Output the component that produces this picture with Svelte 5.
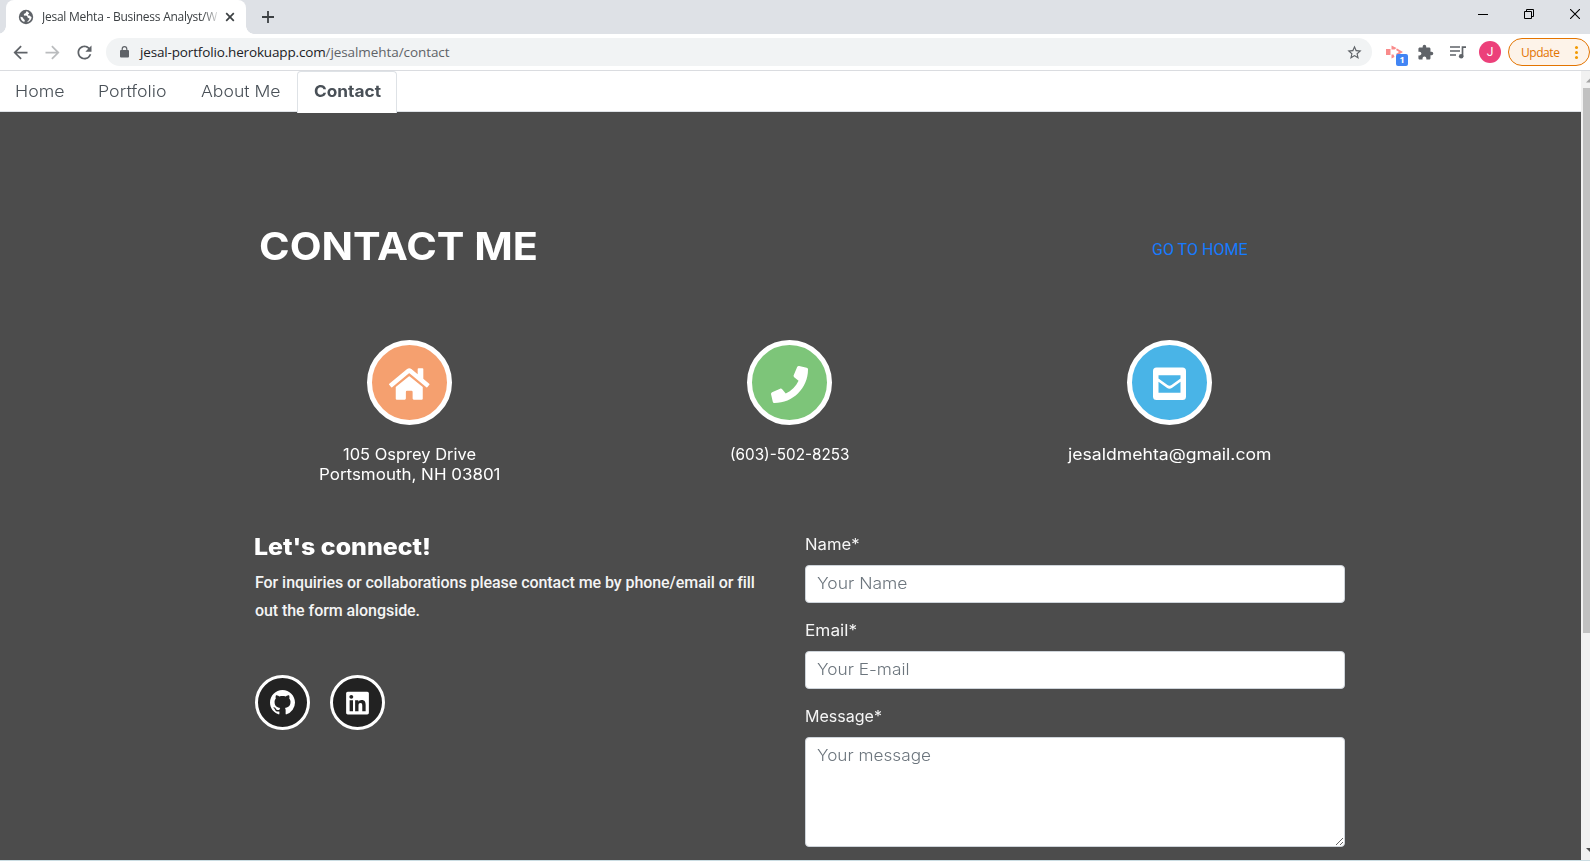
<script>
  const nav = [
    { label: 'Home', width: 49.5 },
    { label: 'Portfolio', width: 68.500 },
    { label: 'About Me', width: 79.5 },
    { label: 'Contact', width: 67, active: true }
  ];

  const fields = [
    { label: 'Name*', width: 54.5, hint: 'Your Name', hintWidth: 90.5 },
    { label: 'Email*', width: 52, hint: 'Your E-mail', hintWidth: 92.5 },
    { label: 'Message*', width: 77, hint: 'Your message', hintWidth: 114, area: true }
  ];

  // Tracks a line of text out (or in) so that it fills the given measure.
  function measure(node, width) {
    const n = node.textContent.length;
    const natural = node.getBoundingClientRect().width;
    node.style.letterSpacing = `${(width - natural) / n}px`;
  }

  function widen(node, width) {
    const natural = node.getBoundingClientRect().width;
    node.style.display = 'inline-block';
    node.style.width = `${width}px`;
    node.style.transformOrigin = '0 50%';
    node.style.transform = `scaleX(${width / natural})`;
  }
</script>

<div class="window">
  <header class="tabstrip">
    <div class="tab">
      <svg class="globe" width="16" height="16" viewBox="0 0 16 16"><circle cx="8" cy="8" r="7.2" fill="#5f6368" /><path d="M8.6 2.2c-1 .6-.2 1.5-1.2 2-.9.4-1.6.5-1.6 1.5 0 .9 1 1 2 .9 1.300 0 1.500.8 1.700 1.600.3.9 1.500.5 1.900 1.300.3.7-.4 1.200-.8 1.800-.4.7-.9 1.300-2 1.900 2.800-.2 4.900-2.300 5-5.200-.8-.1-1.300-.6-1.700-1.200-.7-.2-1.700 0-2-.7-.2-.8.8-1.100 1.300-1.700-.6-1.100-1.600-1.900-2.600-2.200zM2.400 7.800c0 2.500 1.600 4.600 3.900 5.300.1-.9.500-1.100.5-1.900-.1-.8-1.400-.8-1.500-1.800 0-1-1.300-1.400-2.900-1.600z" fill="#fff" /></svg>
      <div class="title"><span use:measure={175}>Jesal Mehta - Business Analyst/W</span></div>
      <svg width="10" height="10" viewBox="0 0 10 10"><path d="M1.200 1.200l7.600 7.600M8.800 1.200L1.200 8.800" stroke="#3c4043" stroke-width="1.700" /></svg>
    </div>
    <svg class="plus" width="12" height="12" viewBox="0 0 12 12"><path d="M6 0v12M0 6h12" stroke="#3c4043" stroke-width="1.800" /></svg>
    <div class="controls">
      <svg width="10" height="10" viewBox="0 0 10 10"><path d="M0 5.500h10" stroke="#000" /></svg>
      <svg width="10" height="10" viewBox="0 0 10 10"><path d="M.5 2.500h7v7h-7zM2.500 2.500v-2h7v7h-2" fill="none" stroke="#000" /></svg>
      <svg width="10" height="10" viewBox="0 0 10 10"><path d="M0 0l10 10M10 0L0 10" stroke="#000" stroke-width="1.100" /></svg>
    </div>
  </header>

  <div class="toolbar">
    <div class="history">
      <svg width="21" height="21" viewBox="0 0 24 24" fill="#5f6368"><path d="M20 11H7.830l5.590-5.590L12 4l-8 8 8 8 1.410-1.410L7.830 13H20v-2z" /></svg>
      <svg width="21" height="21" viewBox="0 0 24 24" fill="#babcbe"><path d="M12 4l-1.410 1.410L16.170 11H4v2h12.170l-5.580 5.590L12 20l8-8z" /></svg>
      <svg width="21" height="21" viewBox="0 0 24 24" fill="#5f6368"><path d="M17.650 6.350A7.958 7.958 0 0 0 12 4c-4.420 0-7.990 3.580-7.990 8s3.570 8 7.990 8c3.730 0 6.840-2.550 7.730-6h-2.080A5.990 5.990 0 0 1 12 18c-3.310 0-6-2.690-6-6s2.690-6 6-6c1.660 0 3.140.69 4.220 1.780L13 11h7V4l-2.350 2.350z" /></svg>
    </div>
    <div class="omnibox">
      <svg class="lock" width="9" height="12" viewBox="0 0 9 12"><rect y="4" width="9" height="7.500" rx="1" fill="#5f6368" /><path d="M2.200 5V2.900a2.300 2.300 0 0 1 4.600 0V5" fill="none" stroke="#5f6368" stroke-width="1.200" /></svg>
      <div class="url"><span class="host" use:measure={185.500}>jesal-portfolio.herokuapp.com</span><span class="path" use:measure={124}>/jesalmehta/contact</span></div>
      <svg class="star" width="17" height="17" viewBox="0 0 24 24" fill="#5f6368"><path d="M22 9.240l-7.190-.62L12 2 9.190 8.630 2 9.240l5.460 4.730L5.820 21 12 17.270 18.180 21l-1.630-7.030L22 9.240zM12 15.400l-3.760 2.270 1-4.280-3.320-2.880 4.380-.38L12 6.100l1.710 4.040 4.380.38-3.320 2.880 1 4.280L12 15.400z" /></svg>
    </div>
    <div class="extensions">
      <div class="recorder">
        <svg width="17" height="14" viewBox="0 0 17 14"><path d="M0 4h4.500v6H0zM5.500 4.500V.5l5 2.500-2 1.500zM5.500 9.500v4l3-1.500-1-2.500zM11 3.500L17 7l-6 3.500-1-1.500L13 7l-3-2z" fill="#f98b8b" /></svg>
        <span class="badge">1</span>
      </div>
      <svg width="17" height="17" viewBox="0 0 24 24" fill="#5f6368"><path d="M20.500 11H19V7c0-1.100-.9-2-2-2h-4V3.500a2.500 2.500 0 0 0-5 0V5H4c-1.100 0-1.990.9-1.990 2v3.800H3.500c1.490 0 2.700 1.210 2.700 2.700s-1.210 2.700-2.700 2.700H2V20c0 1.100.9 2 2 2h3.800v-1.500c0-1.490 1.210-2.700 2.700-2.700s2.700 1.210 2.700 2.700V22H17c1.100 0 2-.9 2-2v-4h1.500a2.500 2.500 0 0 0 0-5z" /></svg>
      <svg class="queue" width="16" height="13" viewBox="0 0 16 13"><path d="M0 1h10M0 5h10M0 9h6M12.500 10V1.200H16" fill="none" stroke="#5f6368" stroke-width="1.700" /><circle cx="11.200" cy="10.200" r="2.300" fill="#5f6368" /></svg>
      <div class="avatar">J</div>
    </div>
    <div class="update"><span use:measure={38.500}>Update</span><i></i></div>
  </div>

  <div class="viewport">
    <div class="page">
      <nav>
        {#each nav as item}
          <a class:active={item.active}><span use:widen={item.width}>{item.label}</span></a>
        {/each}
      </nav>

      <main>
        <div class="masthead">
          <h1><span use:widen={279}>CONTACT ME</span></h1>
          <a class="home-link"><span use:measure={95.500}>GO TO HOME</span></a>
        </div>

        <section class="details">
          <div class="detail">
            <div class="disc orange"><svg width="40.500" height="36" viewBox="0 0 576 512" fill="#fff"><path d="M280.370 148.260L96 300.110V464a16 16 0 0 0 16 16l112.060-.29a16 16 0 0 0 15.920-16V368a16 16 0 0 1 16-16h64a16 16 0 0 1 16 16v95.640a16 16 0 0 0 16 16.050L464 480a16 16 0 0 0 16-16V300L295.670 148.260a12.190 12.190 0 0 0-15.300 0zM571.600 251.470L488 182.560V44.050a12 12 0 0 0-12-12h-56a12 12 0 0 0-12 12v72.610L318.470 43a48 48 0 0 0-61 0L4.340 251.470a12 12 0 0 0-1.600 16.900l25.500 31A12 12 0 0 0 45.150 301l235.220-193.740a12.190 12.190 0 0 1 15.300 0L530.900 301a12 12 0 0 0 16.900-1.600l25.500-31a12 12 0 0 0-1.700-16.930z" /></svg></div>
            <p><span use:widen={133}>105 Osprey Drive</span></p>
            <p><span use:widen={181.500}>Portsmouth, NH 03801</span></p>
          </div>
          <div class="detail">
            <div class="disc green"><svg width="37" height="37" viewBox="0 0 512 512" fill="#fff"><path d="M493.400 24.600l-104-24c-11.300-2.600-22.900 3.300-27.500 13.900l-48 112c-4.200 9.800-1.400 21.300 6.900 28l60.600 49.600c-36 76.700-98.900 140.500-177.200 177.200l-49.600-60.600c-6.800-8.300-18.200-11.100-28-6.900l-112 48C3.900 366.500-2 378.100.6 389.400l24 104C27.100 504.200 36.700 512 48 512c256.100 0 464-207.500 464-464 0-11.200-7.700-20.900-18.600-23.400z" /></svg></div>
            <p><span use:widen={119.500}>(603)-502-8253</span></p>
          </div>
          <div class="detail">
            <div class="disc blue"><svg width="33" height="36" viewBox="0 0 33 36"><path fill="#fff" fill-rule="evenodd" d="M3.500 1.500h26a3.500 3.500 0 0 1 3.500 3.500v25.500a3.500 3.500 0 0 1-3.500 3.500h-26a3.500 3.500 0 0 1-3.500-3.500v-25.500A3.500 3.500 0 0 1 3.500 1.500zM5.500 9.200v3.400l9 6.500q2 1.200 4 0l9-6.500V9.200zM5.500 15.800v11h22v-11l-8.300 6q-2.700 1.800-5.400 0z" /></svg></div>
            <p><span use:widen={203.500}>jesaldmehta@gmail.com</span></p>
          </div>
        </section>

        <section class="connect">
          <div class="intro">
            <h2><span use:widen={177}>Let's connect!</span></h2>
            <p><span use:measure={499.500}>For inquiries or collaborations please contact me by phone/email or fill</span></p>
            <p><span use:measure={165}>out the form alongside.</span></p>
            <div class="social">
              <a><svg width="25" height="25" viewBox="0 0 16 16" fill="#fff"><path d="M8 0C3.580 0 0 3.580 0 8c0 3.540 2.290 6.530 5.470 7.590.4.070.55-.17.55-.38 0-.19-.01-.82-.01-1.490-2.010.37-2.530-.49-2.690-.94-.09-.23-.48-.94-.82-1.130-.28-.15-.68-.52-.01-.53.63-.01 1.080.58 1.230.82.72 1.210 1.870.87 2.330.66.070-.52.28-.87.51-1.070-1.780-.2-3.640-.89-3.640-3.950 0-.87.31-1.590.82-2.150-.08-.2-.36-1.020.08-2.120 0 0 .67-.21 2.200.82.64-.18 1.320-.27 2-.27.68 0 1.360.09 2 .27 1.530-1.040 2.200-.82 2.200-.82.44 1.100.16 1.920.08 2.120.51.56.82 1.270.82 2.150 0 3.070-1.870 3.750-3.650 3.950.29.25.54.73.54 1.480 0 1.070-.01 1.930-.01 2.200 0 .21.15.46.55.38A8.013 8.013 0 0 0 16 8c0-4.420-3.580-8-8-8z" /></svg></a>
              <a><svg width="23" height="26" viewBox="0 0 448 512" fill="#fff"><path d="M416 32H31.900C14.300 32 0 46.500 0 64.300v383.400C0 465.500 14.300 480 31.900 480H416c17.600 0 32-14.500 32-32.300V64.300c0-17.800-14.400-32.300-32-32.300zM135.400 416H69V202.200h66.500V416zm-33.200-243c-21.300 0-38.500-17.300-38.500-38.500S80.900 96 102.200 96c21.200 0 38.500 17.300 38.500 38.500 0 21.300-17.200 38.500-38.500 38.500zm282.100 243h-66.400V312c0-24.800-.5-56.700-34.500-56.700-34.600 0-39.900 27-39.900 54.900V416h-66.400V202.200h63.700v29.200h.9c8.900-16.800 30.600-34.500 62.900-34.500 67.200 0 79.700 44.300 79.700 101.900V416z" /></svg></a>
            </div>
          </div>
          <form>
            {#each fields as f}
              <label>
                <span class="name"><span use:widen={f.width}>{f.label}</span></span>
                <span class="control">
                  {#if f.area}
                    <textarea></textarea>
                  {:else}
                    <input />
                  {/if}
                  <span class="hint"><span use:widen={f.hintWidth}>{f.hint}</span></span>
                </span>
              </label>
            {/each}
          </form>
        </section>
      </main>
    </div>
    <div class="scrollbar">
      <svg width="4" height="5" viewBox="0 0 4 5"><path d="M0 4.500L4 .5v4z" fill="#a3a3a3" /></svg>
      <div class="thumb"></div>
      <svg class="down" width="4" height="5" viewBox="0 0 4 5"><path d="M0 0h4v4z" fill="#505050" /></svg>
    </div>
  </div>
</div>

<style>
  :global(body) { margin: 0; overflow: hidden; }
  .window { width: 1590px; height: 861px; display: flex; flex-direction: column; overflow: hidden; box-sizing: border-box; border-bottom: 1px solid #cbdde3; background: #fff; font-family: Inter, sans-serif; }
  .window * { box-sizing: border-box; }
  svg { display: block; flex: none; }
  span { white-space: nowrap; }
  p, h1, h2 { margin: 0; }

  .tabstrip { height: 34px; flex: none; background: #dee1e6; display: flex; align-items: flex-start; padding-left: 6px; font-family: "Open Sans", sans-serif; }
  .tab { position: relative; width: 240px; height: 34px; background: #fff; border-radius: 8px 8px 0 0; display: flex; align-items: center; padding: 0 11px 0 12px; }
  .tab::before, .tab::after { content: ""; position: absolute; bottom: 0; width: 8px; height: 8px; }
  .tab::before { left: -8px; background: radial-gradient(circle at 0 0, transparent 7.500px, #fff 8px); }
  .tab::after { right: -8px; background: radial-gradient(circle at 100% 0, transparent 7.500px, #fff 8px); }
  .title { width: 175px; margin: 0 auto 0 8px; overflow: hidden; font-size: 12px; line-height: 18px; color: #3c4043; -webkit-mask-image: linear-gradient(90deg, #000 92%, transparent 102%); mask-image: linear-gradient(90deg, #000 92%, transparent 102%); }
  .plus { margin: 11px 0 0 16px; }
  .controls { margin: 9px 10px 0 auto; display: flex; gap: 36px; }

  .toolbar { height: 37px; flex: none; border-bottom: 1px solid #dadce0; display: flex; align-items: center; padding-left: 9.500px; font-family: "Open Sans", sans-serif; }
  .history { display: flex; gap: 11px; width: 96.500px; }
  .omnibox { width: 1266px; height: 28px; border-radius: 14px; background: #f1f3f4; display: flex; align-items: center; padding: 0 9px 0 14px; }
  .url { margin: 0 auto 0 11px; display: flex; font-size: 13.500px; line-height: 20px; }
  .lock { margin-top: -1px; }
  .host { color: #202124; }
  .path { color: #5f6368; }
  .extensions { display: flex; align-items: center; margin-left: 14px; }
  .recorder { position: relative; width: 31px; height: 14px; }
  .badge { position: absolute; left: 10px; top: 9px; width: 12px; height: 12px; border-radius: 2px; background: #4285f4; color: #fff; font-size: 9px; font-weight: 700; line-height: 12px; text-align: center; }
  .queue { margin-left: 16px; }
  .avatar { width: 22px; height: 22px; border-radius: 50%; margin-left: 13px; background: #ec407a; color: #fff; font: 12px/22px Roboto, sans-serif; text-align: center; }
  .update { margin-left: 7px; width: 82px; height: 28px; border: 1px solid #e37400; border-radius: 14px; background: #fdf3e9; color: #e37400; font-size: 12px; display: flex; align-items: center; justify-content: space-between; padding: 0 11px 0 12px; }
  .update i { width: 3px; height: 3px; border-radius: 50%; background: #f29900; box-shadow: 0 -5px #f29900, 0 5px #f29900; }

  .viewport { flex: 1; min-height: 0; display: flex; }
  .page { width: 1581px; background: #4c4c4c; overflow: hidden; }
  nav { height: 41px; background: #fff; border-bottom: 1px solid #dee2e6; display: flex; }
  nav a { padding: 0 17px 0 17px; line-height: 41px; font-size: 16.500px; font-weight: 300; color: #495057; height: 42px; flex: none; }
  nav a:first-child { padding-left: 14.500px; }
  nav a.active { padding: 0 15.500px; border: 1px solid #dee2e6; border-bottom: 0; border-radius: 4px 4px 0 0; line-height: 39px; font-weight: 700; background: #fff; }

  main { width: 1140px; margin-left: 219.500px; color: #fff; }
  .masthead { display: flex; justify-content: space-between; padding: 110px 112px 0 39px; height: 228px; }
  h1 { font-size: 38.500px; line-height: 48px; font-weight: 700; }
  .home-link { font: 16px/24px Roboto, sans-serif; color: #167bff; padding-top: 16px; }
  .details { display: grid; grid-template-columns: repeat(3, 380px); height: 193px; }
  .detail { display: flex; flex-direction: column; align-items: center; font-size: 15.500px; line-height: 20px; }
  .disc { width: 85px; height: 85px; border: 5px solid #fff; border-radius: 50%; display: flex; align-items: center; justify-content: center; padding-top: 3px; margin-bottom: 20px; }
  .orange { background: #f5a06f; }
  .green { background: #7dc579; }
  .blue { background: #49b4e7; }

  .connect { display: grid; grid-template-columns: 550px 540px; padding-left: 35.500px; }
  h2 { font-size: 23px; line-height: 30px; font-weight: 800; }
  .intro { font: 500 16px/28px Roboto, sans-serif; color: #f4f4f4; margin-top: -1px; }
  .intro h2 { font-family: Inter, sans-serif; color: #fff; margin: 0 0 7px -1px; }
  .social { display: flex; gap: 20px; margin-top: 50px; }
  .social a { width: 55px; height: 55px; border: 3px solid #fff; border-radius: 50%; background: #222; display: flex; align-items: center; justify-content: center; }
  form { display: flex; flex-direction: column; gap: 16px; }
  label { display: block; font-size: 15.500px; }
  .name { display: block; height: 24px; line-height: 24px; margin-bottom: 8px; color: #f5f5f5; }
  .control { display: block; position: relative; }
  .hint { position: absolute; left: 12px; top: 7px; font-weight: 300; line-height: 24px; color: #6c757d; pointer-events: none; }
  input, textarea { display: block; width: 540px; height: 38px; border: 1px solid #ced4da; border-radius: 4px; background: #fff; padding: 6px 12px; font: 15.500px/24px Inter, sans-serif; outline: 0; }
  textarea { height: 110px; resize: vertical; }

  .scrollbar { width: 9px; background: #f1f1f1; display: flex; flex-direction: column; align-items: flex-end; padding: 7px 0 7px; }
  .thumb { width: 7px; height: 545px; background: #c1c1c1; margin-top: 5px; }
  .down { margin-top: auto; }
</style>
